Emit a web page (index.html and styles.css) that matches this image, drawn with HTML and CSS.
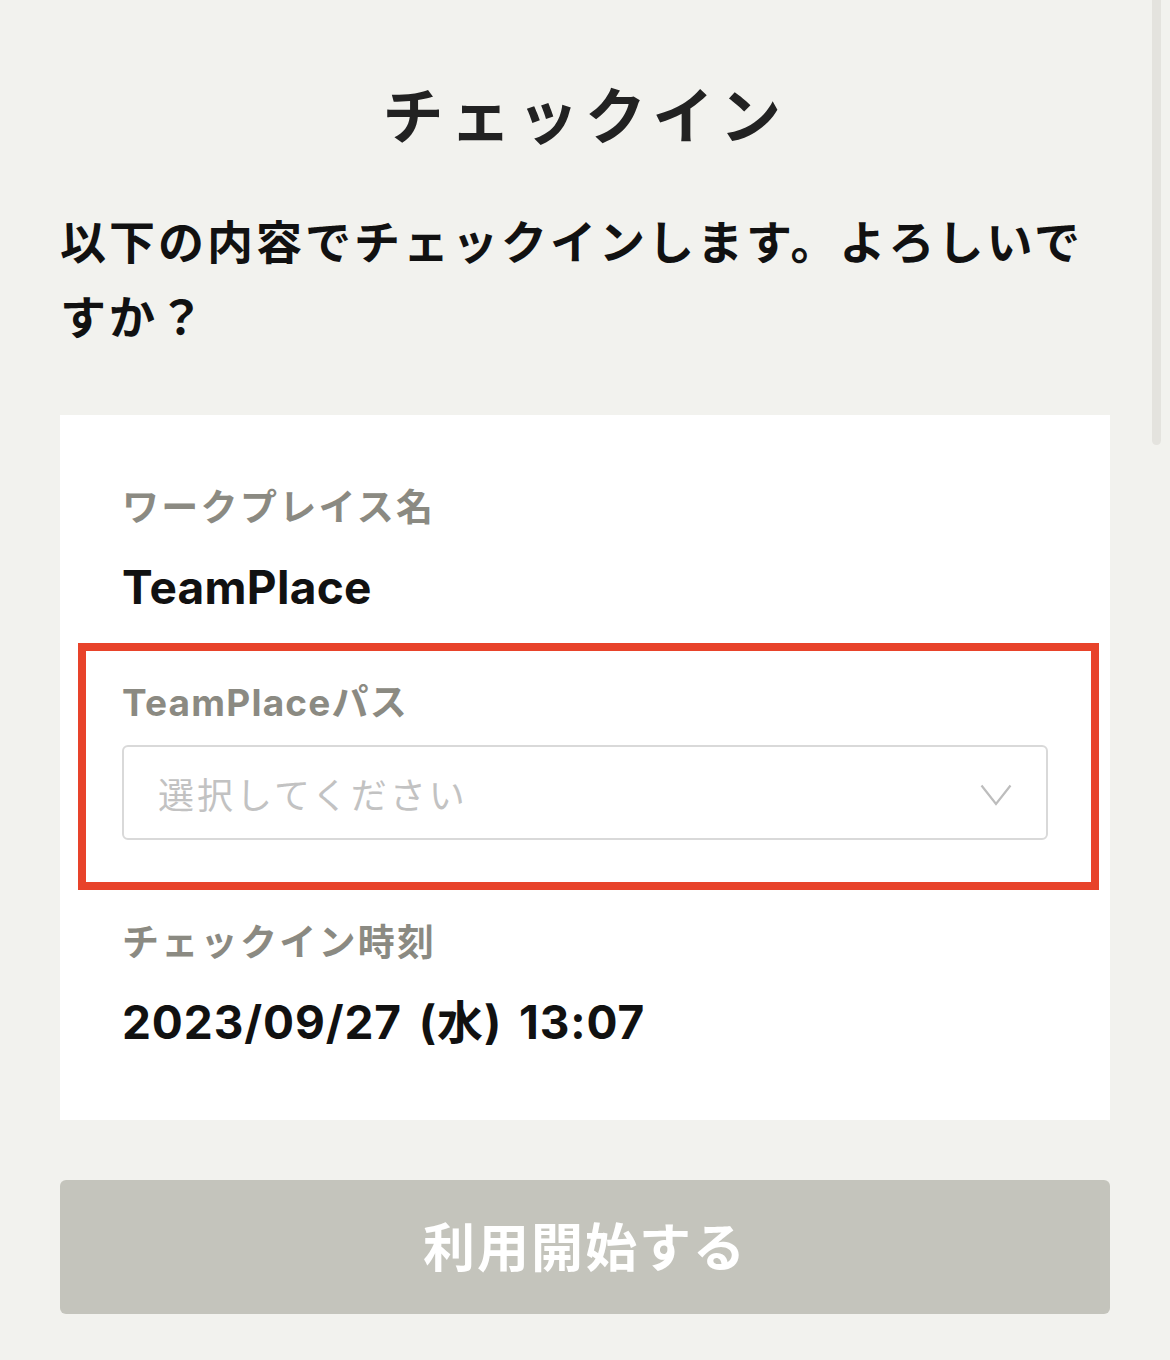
FILE: index.html
```html
<!DOCTYPE html>
<html lang="ja">
<head>
<meta charset="utf-8">
<title>チェックイン</title>
<link rel="stylesheet" href="styles.css">
</head>
<body>
<div class="scrollbar"></div>
<main class="page">
  <h1 class="title">チェックイン</h1>
  <p class="lead">以下の内容でチェックインします。よろしいですか？</p>
  <section class="card">
    <div class="field">
      <div class="label">ワークプレイス名</div>
      <div class="value">TeamPlace</div>
    </div>
    <div class="field field-pass highlight">
      <div class="label label-latin">TeamPlaceパス</div>
      <div class="select">
        <span class="placeholder">選択してください</span>
        <svg class="chevron" width="32" height="22" viewBox="0 0 32 22"><polyline points="1.5,1.5 16,20 30.5,1.5" fill="none" stroke="#bdbdbd" stroke-width="2.2"/></svg>
      </div>
    </div>
    <div class="field field-time">
      <div class="label">チェックイン時刻</div>
      <div class="value value-date">2023/09/27 (水) 13:07</div>
    </div>
  </section>
  <button class="start" type="button">利用開始する</button>
</main>
</body>
</html>
```
FILE: styles.css
```css
html, body {
  margin: 0;
  padding: 0;
  background: #f2f2ee;
}
body {
  font-family: "Noto Sans CJK JP", "Noto Sans", sans-serif;
  color: #111;
}
.page {
  padding: 0 60px 46px;
}
.title {
  margin: 0;
  padding-top: 73px;
  font-size: 61px;
  line-height: 80px;
  font-weight: 700;
  letter-spacing: 6.5px;
  text-align: center;
  color: #222;
}
.lead {
  margin: 49px 0 0;
  font-size: 46px;
  line-height: 75px;
  font-weight: 700;
  letter-spacing: 3px;
  color: #111;
}
.card {
  margin-top: 63px;
  background: #fff;
  padding: 68px 62px 68px;
}
.field {
  display: flex;
  flex-direction: column;
}
.field-pass {
  margin-top: 61px;
  gap: 17px;
}
.field-time {
  margin-top: 78px;
}
.label {
  font-size: 37px;
  line-height: 50px;
  font-weight: 700;
  letter-spacing: 2.3px;
  color: #8b8a82;
  font-family: "Inter", "Noto Sans CJK JP", sans-serif;
}
.label-latin {
  letter-spacing: 1.2px;
}
.value {
  margin-top: 24px;
  font-family: "Inter", "Noto Sans CJK JP", sans-serif;
  font-size: 46px;
  line-height: 60px;
  font-weight: 700;
  letter-spacing: 0.3px;
  color: #111;
}
.value-date {
  letter-spacing: 0.9px;
  word-spacing: 5px;
}
.highlight {
  position: relative;
}
.highlight::after {
  content: "";
  position: absolute;
  top: -35px;
  left: -44px;
  right: -51px;
  bottom: -50px;
  border: 8px solid #e8432a;
  pointer-events: none;
}
.select {
  height: 91px;
  border: 2px solid #d9d9d9;
  border-radius: 6px;
  display: flex;
  align-items: center;
  justify-content: space-between;
  padding: 0 34px;
}
.placeholder {
  font-size: 36px;
  letter-spacing: 3px;
  color: #c2c2c2;
  font-weight: 400;
}
.chevron {
  display: block;
  margin-top: 4px;
}
.start {
  display: block;
  width: 100%;
  margin-top: 60px;
  height: 134px;
  border: none;
  border-radius: 6px;
  background: #c4c4bc;
  color: #fff;
  font-family: "Noto Sans CJK JP", sans-serif;
  font-size: 52px;
  font-weight: 700;
  letter-spacing: 2px;
  padding: 0 0 6px;
}
.scrollbar {
  position: absolute;
  top: 0;
  left: 1152px;
  width: 9px;
  height: 445px;
  border-radius: 0 0 5px 5px;
  background: #e4e3de;
}
```
